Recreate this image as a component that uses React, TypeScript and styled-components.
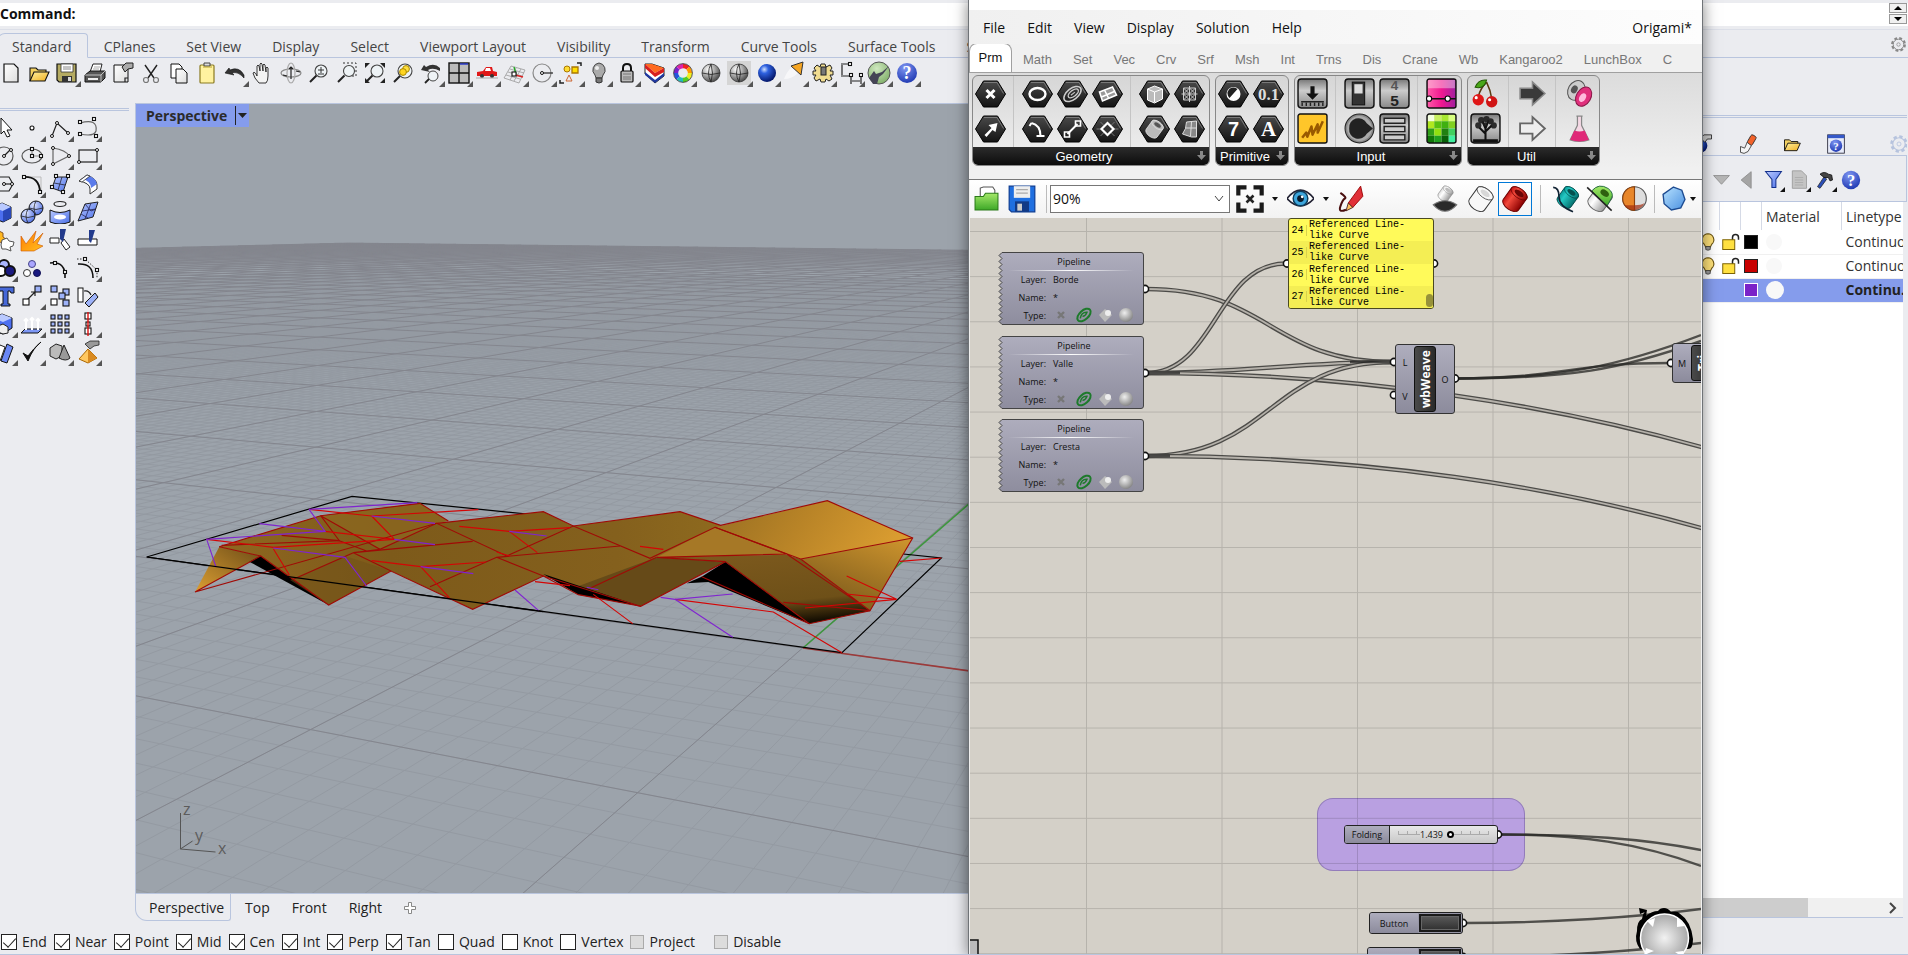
import React from "react";
import styled, { createGlobalStyle, css } from "styled-components";

const GlobalStyle = createGlobalStyle`
  * { box-sizing: border-box; }
  html, body { margin: 0; height: 100%; overflow: hidden; }
  body { font-family: "Open Sans", "Noto Sans", sans-serif; font-size: 14px; color: #333; background: #ebecf0; }
  button, input, select { font: inherit; color: inherit; margin: 0; padding: 0; border: 0; background: none; }
  button svg { display: block; }
`;

const line = "#b9c5de";
const blue = "#859cec";

/* ---------- Shared paint servers ---------- */

const DefsSvg = styled.svg`
  position: absolute;
  width: 0;
  height: 0;
`;

const Defs = () => (
  <DefsSvg aria-hidden="true">
    <defs>
      <radialGradient id="ballGrey" cx="35%" cy="30%" r="75%">
        <stop offset="0" stopColor="#fff" /><stop offset=".5" stopColor="#a5a5a5" /><stop offset="1" stopColor="#444" />
      </radialGradient>
      <radialGradient id="ballBlue" cx="35%" cy="30%" r="75%">
        <stop offset="0" stopColor="#cfe0ff" /><stop offset=".3" stopColor="#2f62e0" /><stop offset="1" stopColor="#001060" />
      </radialGradient>
      <radialGradient id="ballSoft" cx="35%" cy="30%" r="75%">
        <stop offset="0" stopColor="#e4eaff" /><stop offset="1" stopColor="#4a6be0" />
      </radialGradient>
      <radialGradient id="ballHelp" cx="40%" cy="25%" r="80%">
        <stop offset="0" stopColor="#7f96f2" /><stop offset="1" stopColor="#1c36b0" />
      </radialGradient>
      <radialGradient id="ballGreen" cx="40%" cy="30%" r="75%">
        <stop offset="0" stopColor="#cfe8bf" /><stop offset="1" stopColor="#7fae68" />
      </radialGradient>
      <linearGradient id="hexFill" x1="0" y1="0" x2="0" y2="1">
        <stop offset="0" stopColor="#4a4a4a" /><stop offset="1" stopColor="#141414" />
      </linearGradient>
      <linearGradient id="folder" x1="0" y1="0" x2="1" y2="1">
        <stop offset="0" stopColor="#fff0a0" /><stop offset="1" stopColor="#f0b020" />
      </linearGradient>
      <linearGradient id="paper" x1="0" y1="0" x2="1" y2="1">
        <stop offset="0" stopColor="#fff" /><stop offset="1" stopColor="#ddd" />
      </linearGradient>
      <linearGradient id="bluePatch" x1="0" y1="0" x2="1" y2="1">
        <stop offset="0" stopColor="#b9c9ff" /><stop offset="1" stopColor="#4a6fe8" />
      </linearGradient>
      <linearGradient id="flame" x1="0" y1="0" x2="1" y2="1">
        <stop offset="0" stopColor="#ff7a00" /><stop offset="1" stopColor="#ffc020" />
      </linearGradient>
      <linearGradient id="silver" x1="0" y1="0" x2="0" y2="1">
        <stop offset="0" stopColor="#777" /><stop offset=".4" stopColor="#ccc" /><stop offset="1" stopColor="#888" />
      </linearGradient>
      <linearGradient id="redCyl" x1="0" y1="0" x2="1" y2="0">
        <stop offset="0" stopColor="#c01010" /><stop offset=".3" stopColor="#f24a3c" /><stop offset="1" stopColor="#8a0000" />
      </linearGradient>
      <linearGradient id="tealCyl" x1="0" y1="0" x2="1" y2="0">
        <stop offset="0" stopColor="#0a9a98" /><stop offset=".3" stopColor="#25c9c4" /><stop offset="1" stopColor="#05706e" />
      </linearGradient>
      <linearGradient id="greyCyl" x1="0" y1="0" x2="1" y2="0">
        <stop offset="0" stopColor="#ddd" /><stop offset=".3" stopColor="#fff" /><stop offset="1" stopColor="#999" />
      </linearGradient>
      <linearGradient id="sky" x1="0" y1="0" x2="1" y2="1">
        <stop offset="0" stopColor="#b8e2ff" /><stop offset="1" stopColor="#4a90e0" />
      </linearGradient>
      <linearGradient id="green" x1="0" y1="0" x2="0" y2="1">
        <stop offset="0" stopColor="#a4e868" /><stop offset="1" stopColor="#3da828" />
      </linearGradient>
      <linearGradient id="pink" x1="0" y1="0" x2="1" y2="0">
        <stop offset="0" stopColor="#ff5aa8" /><stop offset=".5" stopColor="#f01890" /><stop offset="1" stopColor="#a020a0" />
      </linearGradient>
    </defs>
  </DefsSvg>
);

/* ---------- Icon drawings (24 x 24 unless stated) ---------- */

const k = { fill: "none", stroke: "#222", strokeWidth: 1.2 } as const;
const Sq = ({ x, y, s = 4, f = "#fff" }: { x: number; y: number; s?: number; f?: string }) => (
  <rect x={x - s / 2} y={y - s / 2} width={s} height={s} fill={f} stroke="#111" strokeWidth="1.1" />
);
const Dot = ({ x, y }: { x: number; y: number }) => <circle cx={x} cy={y} r="1.5" fill="#fff" stroke="#111" />;
const Lens = ({ r = 6 }: { r?: number }) => (
  <>
    <path d="M9.5 14.5L3 21" stroke="#222" strokeWidth="2" />
    <circle cx="14" cy="10" r={r} fill="#eef3f6" stroke="#444" strokeWidth="1.1" />
  </>
);
const Help = () => (
  <>
    <circle cx="12" cy="12" r="10" fill="url(#ballHelp)" />
    <text x="12" y="18" textAnchor="middle" fontFamily="Liberation Serif, serif" fontWeight="bold" fontSize="18" fill="#fff">?</text>
  </>
);
const Meridians = () => <path d="M3 12q9 3 18 0M12 3q-5 9 0 18M12 3q3 9 0 18" fill="none" stroke="#222" strokeWidth=".8" />;
const Hammer = () => (
  <>
    <path d="M11 8L3 20l3 2 8-11z" fill="#2c4fb8" stroke="#111" strokeWidth=".8" />
    <path d="M6 5q5-4 10 0l4 1 1 6-3 1-2-4-5 0z" fill="#444" stroke="#111" />
  </>
);
const Cylinder = ({ fill, hole, edge }: { fill: string; hole: string; edge: string }) => (
  <g transform="rotate(36 12 12)">
    <path d="M4 6a8 4 0 0 1 16 0v12a8 4.500 0 0 1-16 0z" fill={fill} stroke={edge} strokeWidth=".8" />
    <ellipse cx="12" cy="6" rx="8" ry="4" fill={fill} stroke={edge} strokeWidth=".6" />
    <ellipse cx="12" cy="6" rx="4.500" ry="2.200" fill={hole} />
  </g>
);

const art: Record<string, React.ReactNode> = {
  new: <path d="M5 3h10l4 4v14H5z" fill="url(#paper)" stroke="#111" strokeWidth="1.2" />,
  open: (
    <>
      <path d="M3 20V7h6l2 2h8v3" fill="#f3d060" stroke="#111" strokeWidth="1.1" />
      <path d="M3 20l4-9h15l-4 9z" fill="url(#folder)" stroke="#111" strokeWidth="1.1" />
    </>
  ),
  save: (
    <>
      <path d="M2 3h19v18H4l-2-2z" fill="#b5ab62" stroke="#111" strokeWidth="1.2" />
      <path d="M6 3h12v8H6z" fill="#fff" stroke="#333" strokeWidth=".8" />
      <path d="M8 6h8M8 8h8" stroke="#888" />
      <path d="M7 15h10v6H7z" fill="#333" /><path d="M13 16h3v4h-3z" fill="#ddd" />
    </>
  ),
  print: (
    <>
      <path d="M7 11l3-8h9l-2 8z" fill="#fff" stroke="#222" /><path d="M11 6h6M10 8h6" stroke="#888" strokeWidth=".7" />
      <path d="M2 14l5-4h15v7l-4 4H2z" fill="#555" stroke="#111" /><path d="M2 14h16l4-4M18 14v7" stroke="#ddd" strokeWidth=".8" fill="none" />
      <path d="M5 17h10v2H5z" fill="#eee" />
    </>
  ),
  props: (<><path d="M3 4h14v17H3z" fill="url(#paper)" stroke="#111" /><path d="M14 21v-4h3" {...k} /><path d="M11 6l4-4h7v5l-5 1-3 3z" fill="#aaa" stroke="#222" /></>),
  cut: (
    <>
      <path d="M6 4l9 13M18 4L9 17" stroke="#222" strokeWidth="1.4" />
      <circle cx="7" cy="19" r="2.5" {...k} stroke="#777" /><circle cx="17" cy="19" r="2.5" {...k} stroke="#777" />
    </>
  ),
  copy: (<><path d="M4 3h8l3 3v11H4z" fill="#fff" stroke="#111" /><path d="M9 8h7l4 4v10H9z" fill="url(#paper)" stroke="#111" /></>),
  paste: (<><rect x="5" y="4" width="14" height="18" rx="1" fill="#fff2a0" stroke="#8a7a20" strokeWidth="1.2" /><path d="M9 5V2h6v3z" fill="#ddd" stroke="#444" /><path d="M8 6h9" stroke="#b59f30" /></>),
  undo: <path d="M2 12l4-5 1 2q9-4 14 5l0 3q-6-7-12-5l2 2z" fill="#333" stroke="#111" strokeWidth=".6" />,
  pan: <path d="M8 22q-5-5-6-10 2-2 4 3V5q1-2 2 0l1 5V3q1-2 2 0l1 7V4q1-2 2 0l1 7V7q1-2 2 0v8q0 5-2 7z" fill="#f3f3f3" stroke="#222" strokeWidth=".9" />,
  orbit: (<><ellipse cx="12" cy="12" rx="10" ry="4" {...k} stroke="#888" /><ellipse cx="12" cy="12" rx="4" ry="10" {...k} stroke="#aaa" /><path d="M12 6v12M10 8l2-2 2 2M8 15l-4-1M17 10l4 1" {...k} /></>),
  zoom: (<><Lens /><path d="M11 9h6M14 6v6M11 13h6" stroke="#333" fill="none" /></>),
  zoomWin: (<><path d="M8 2h13v13h-5" fill="none" stroke="#333" strokeDasharray="2 2" /><Lens r={5.5} /></>),
  zoomExt: (<><Lens r={6} /><path d="M2 7V2h5zM17 2h5v5zM22 17v5h-5zM2 17v5h5z" fill="#222" /></>),
  zoomSel: (<><Lens r={7} /><circle cx="15" cy="8" r="3.4" fill="#ffe040" stroke="#a80" /><circle cx="12" cy="11" r="3.4" fill="#ffd520" stroke="#a80" /></>),
  zoomPrev: (<><path d="M2 9l3-5 2 2q8-5 14 1v3q-7-4-12-1l2 2z" fill="#333" /><circle cx="14" cy="15" r="5" fill="#eef3f6" stroke="#444" /><path d="M10 18l-4 4" stroke="#222" strokeWidth="1.8" /></>),
  views: (<><rect x="2" y="2" width="20" height="20" fill="#bbb" stroke="#111" strokeWidth="1.4" /><path d="M12 2v20M2 12h20" stroke="#111" strokeWidth="1.4" /><path d="M13 3h8" stroke="#23c" strokeWidth="1.4" /></>),
  car: (<><path d="M2 15v-4l6-1 3-4h6l1 4 4 1v4z" fill="#e01818" /><path d="M11 7h4l1 3h-6z" fill="#fff" /><circle cx="7" cy="15" r="2" fill="#333" /><circle cx="17" cy="15" r="2" fill="#333" /><path d="M1 17h22" stroke="#aaa" /></>),
  cplane: (<><path d="M8 5l14 4-6 13L1 17zM5 11l14 4M13 7l-6 12M18 8l-7 12M7 8l14 4M3 14l14 4" fill="none" stroke="#999" strokeWidth=".8" /><path d="M13 13l-2-7" stroke="#2a2" strokeWidth="1.4" /><path d="M12 14l8 2" stroke="#d22" strokeWidth="1.4" /><Sq x={11} y={13} /></>),
  setcp: (<><circle cx="11" cy="12" r="9" {...k} stroke="#888" /><path d="M11 12h11" {...k} /><Dot x={11} y={12} /></>),
  shapes: (<><circle cx="8" cy="8" r="3" fill="#fd3" stroke="#a70" /><path d="M13 6h6v6h-6z" fill="#fd0" stroke="#a70" strokeWidth="1.3" /><path d="M10 14l3 6H7z" fill="none" stroke="#c63" /><path d="M18 2h4v3M1 19v3h4" {...k} strokeWidth="1.5" /></>),
  bulb: (<><path d="M12 2a7 7 0 0 0-4 12l1 3h6l1-3a7 7 0 0 0-4-12z" fill="#aaa" stroke="#444" /><path d="M9 17h6v4l-3 1-3-1z" fill="#777" stroke="#333" /><circle cx="10" cy="7" r="2" fill="#eee" /></>),
  lock: (<><path d="M8 11V7q0-4 4-4t4 4v4" fill="none" stroke="#111" strokeWidth="2" /><rect x="6" y="10" width="12" height="11" rx="1" fill="#bbb" stroke="#111" strokeWidth="1.2" /><path d="M8 13h8M8 16h8M8 18h8" stroke="#777" /></>),
  layer: (<><path d="M2 3l7 0 12 4v8l-9 7-10-9z" fill="#fff" stroke="#222" /><path d="M2 3l7 0 12 4-9 5z" fill="#ff6a20" /><path d="M2 3l10 9v4L2 7zM12 12l9-5v4l-9 5z" fill="#d81e1e" /><path d="M2 11l10 8 9-7v3l-9 7-10-8z" fill="#2038a0" /></>),
  wheel: (
    <>
      {["#e22", "#f90", "#ee2", "#5c2", "#2bb", "#25d", "#72c", "#d2a"].map((c, i) => (
        <path key={c} d="M12 5A7 7 0 0 1 17 7" fill="none" stroke={c} strokeWidth="4.4" transform={`rotate(${i * 45} 12 12)`} />
      ))}
      <circle cx="12" cy="12" r="9.4" fill="none" stroke="#333" strokeWidth=".8" />
    </>
  ),
  wire: (<><circle cx="12" cy="12" r="9" fill="url(#ballGrey)" stroke="#333" strokeWidth=".8" /><Meridians /></>),
  shade: (<><rect width="24" height="24" fill="#d5d5d5" /><circle cx="12" cy="12" r="9" fill="url(#ballGrey)" stroke="#333" strokeWidth=".8" /><Meridians /></>),
  render: <circle cx="12" cy="12" r="9" fill="url(#ballBlue)" />,
  spot: (<><path d="M1 18q3-8 8-12l6 6q-6 6-14 6z" fill="#fff" opacity=".6" /><path d="M8 5l12-4-2 13z" fill="#f6a623" stroke="#333" /></>),
  gear: (<><path d="M10 3h4l1 3 4-2 2 3-2 3h3v4l-3 0 2 4-3 2-3-2-1 3h-4l-1-3-4 2-2-3 2-3-3 0v-4l3 0-2-3 3-3 3 2z" fill="#f0dc90" stroke="#222" /><rect x="10" y="6" width="5" height="8" fill="#777" stroke="#222" /></>),
  dims: (<><path d="M2 3h8M2 15h9M3 4v10M12 15v8M22 15v8M13 20h8" {...k} /><Sq x={11} y={3} s={3} /><Sq x={12} y={14} s={3} /><Sq x={22} y={14} s={3} /></>),
  gh: (<><circle cx="12" cy="12" r="11" fill="url(#ballGreen)" stroke="#555" /><path d="M2 17l5-7 2 3 6-2 7-6-6 8-4 3-2 7H6z" fill="#445" /></>),
  help: <Help />,

  arrow: <path d="M9 2l11 12-5 0 3 6-3 1-3-6-3 3z" fill="#fff" stroke="#111" />,
  point: <circle cx="12" cy="12" r="2" fill="#fff" stroke="#111" strokeWidth="1.1" />,
  polyline: (<><path d="M4 20L9 7l11 10" {...k} /><Dot x={4} y={20} /><Dot x={9} y={7} /><Dot x={20} y={17} /></>),
  curve: (<><path d="M4 7q18-5 16 8-2 6-16 3" {...k} stroke="#666" /><Sq x={4} y={6} s={3} /><Sq x={18} y={3} s={3} /><Sq x={4} y={18} s={3} /><Sq x={20} y={20} s={3} /></>),
  circle: (<><circle cx="12" cy="12" r="9" {...k} stroke="#555" /><path d="M12 12l7-7" {...k} /><Dot x={12} y={12} /><Dot x={19} y={6} /></>),
  ellipse: (<><ellipse cx="12" cy="12" rx="10" ry="7" {...k} stroke="#555" /><path d="M12 5v7h9" {...k} stroke="#888" /><Sq x={12} y={5} s={3} /><Sq x={12} y={12} s={3} /><Sq x={21} y={12} s={3} /></>),
  arc: (<><path d="M5 4q13 2 16 8L5 20z" {...k} stroke="#666" /><Dot x={5} y={4} /><Dot x={21} y={12} /><Dot x={5} y={20} /></>),
  rect: (<><rect x="3" y="6" width="18" height="12" {...k} /><Dot x={3} y={18} /><Dot x={21} y={6} /></>),
  polygon: (<><path d="M1 5h16l4 7-4 7H1" {...k} /><path d="M12 12h8" {...k} /><Dot x={12} y={12} /><Dot x={20} y={12} /></>),
  fillet: (<><path d="M3 5h18v16" fill="none" stroke="#bbb" /><path d="M3 5q17-1 17 16" fill="none" stroke="#111" strokeWidth="1.8" /><Sq x={4} y={5} s={3} /><Sq x={20} y={20} s={3} /></>),
  surface: (<><path d="M8 5h12l-5 15-11-4z" fill="url(#bluePatch)" stroke="#222" /><path d="M14 5l-4 13M6 11l11 2" stroke="#223" strokeWidth=".8" /><Sq x={8} y={4} s={3} /><Sq x={20} y={4} s={3} /><Sq x={4} y={15} s={3} /><Sq x={15} y={20} s={3} /></>),
  revolve: (<><path d="M3 9l8-6q10 4 10 10v4l-7 5v-5q0-6-11-8z" fill="#fff" stroke="#333" /><path d="M6 7q9 2 9 9l6-4Q20 6 11 3z" fill="#5b7bea" /><path d="M3 9l8-6 3 1-8 6z" fill="#fff" stroke="#333" strokeWidth=".8" /></>),
  box: (<><path d="M1 8l9-5 9 4v11l-8 4-10-4z" fill="#4c6ff0" stroke="#111" /><path d="M1 8l9-5 9 4-8 4z" fill="#b9c9ff" /><path d="M11 11l8-4v11l-8 4z" fill="#2a48b8" /></>),
  spheres: (<><circle cx="16" cy="8" r="7" fill="url(#ballSoft)" stroke="#111" /><circle cx="8" cy="16" r="7" fill="url(#ballSoft)" stroke="#111" /><path d="M9 8q7 3 14 0M16 1q-4 7 0 14M1 16q7 3 14 0M8 9q-4 7 0 14" {...k} strokeWidth=".8" /></>),
  loft: (<><ellipse cx="12" cy="4" rx="6" ry="2.5" {...k} /><path d="M2 10q10 5 20 0v12q-10 4-20 0z" fill="url(#bluePatch)" stroke="#111" /><ellipse cx="12" cy="17" rx="6" ry="2.5" fill="#fff" /></>),
  mesh: (<><path d="M9 4l13-2-5 15-15 4z" fill="url(#bluePatch)" stroke="#222" /><path d="M15 3L9 19M6 11l14-2M9 4l6 7M15 11l5-2M5 14l7 4" stroke="#225" strokeWidth=".8" /></>),
  puzzle: (<><path d="M5 2l6 3 0 4 4 3-3 4-6-3-4 0V3z" fill="#ffb820" stroke="#852" /><path d="M10 12l5-2 2 3 5 1-1 4-3 1 1 4-5-2-4 0-1-4z" fill="#fff" stroke="#555" /></>),
  explode: <path d="M1 23V8l5 8L16 3l-3 12L23 5l-6 11 6 2-9 5z" fill="url(#flame)" stroke="#c50" strokeWidth=".6" />,
  trim: (<><path d="M2 10h9v5H2zM13 15l3-4 6 8-4 3z" fill="#fff" stroke="#222" /><path d="M12 1h6l-3 13-3-3z" fill="#223a8c" /></>),
  split: (<><path d="M2 11h19v6H2z" fill="#fff" stroke="#111" /><path d="M13 2h6l-4 13-2-2z" fill="#223a8c" /></>),
  group: (<><circle cx="12" cy="9" r="5" fill="#aab6ff" stroke="#111" strokeWidth="2" /><circle cx="9" cy="15" r="5" fill="#fff" stroke="#111" strokeWidth="2" /><circle cx="18" cy="15" r="5" fill="#1a1a80" stroke="#111" strokeWidth="2" /></>),
  ungroup: (<><circle cx="12" cy="8" r="3.5" fill="#aaa6ff" stroke="#448" /><circle cx="7" cy="17" r="3.5" fill="#fff" stroke="#333" /><circle cx="17" cy="17" r="3.5" fill="#1a1a80" stroke="#115" /></>),
  editPts: (<><path d="M2 7q16-2 15 15" fill="none" stroke="#111" strokeWidth="1.6" /><Sq x={7} y={7} s={3} /><Sq x={17} y={16} s={3} /></>),
  ctrlPts: (<><path d="M2 8q15-1 15 14" fill="none" stroke="#111" strokeWidth="1.6" /><path d="M1 3h8l12 11v8" fill="none" stroke="#333" strokeDasharray="1.5 1.5" /><Sq x={9} y={3} s={3} /><Sq x={21} y={14} s={3} /></>),
  text: <path d="M5 3h17v6h-3l-1-2h-2v13h2v2H9v-2h2V7H8L6 10z" fill="#4668d8" stroke="#111" />,
  move: (<><path d="M7 16l8-8m-4 0h4v4" {...k} /><Sq x={6} y={18} s={6} /><Sq x={18} y={5} s={6} f="#9db2f8" /></>),
  copies: (<><Sq x={6} y={5} s={6} f="#9db2f8" /><Sq x={18} y={8} s={6} f="#9db2f8" /><Sq x={14} y={12} s={6} f="#9db2f8" /><Sq x={6} y={18} s={6} /><Sq x={18} y={19} s={6} f="#9db2f8" /></>),
  rotate: (<><rect x="2" y="4" width="5" height="14" fill="#fff" stroke="#111" /><path d="M8 7q5-1 7 4" {...k} /><path d="M9 19l10-10 3 4-9 10z" fill="#9db2f8" stroke="#111" /></>),
  cage: (<><path d="M1 6l9-4 10 4v10l-9 6-10-3z" fill="#4c6ff0" stroke="#111" /><path d="M1 6l9-4 10 4-9 4z" fill="#b9c9ff" /><path d="M6 14l5-2 5 3v6l-5 1-5-2z" fill="#eee" stroke="#222" /></>),
  extrude: (<><path d="M1 21l4-4h17l-4 4z" fill="#7d97f5" stroke="#111" /><path d="M6 18V7m-2 2l2-2 2 2M12 18V6m-2 2l2-2 2 2M18 18V7m-2 2l2-2 2 2" stroke="#fff" strokeWidth="2" fill="none" /></>),
  array: <>{[5, 12, 19].map((y) => [5, 12, 19].map((x) => <Sq key={`${x}-${y}`} x={x} y={y} s={4} f="#9db2f8" />))}</>,
  align: (<><Sq x={12} y={4} s={6} /><Sq x={12} y={12} s={4} /><Sq x={12} y={19} s={6} /><path d="M12 0v24" stroke="#d11" strokeWidth="1.4" /></>),
  flow: (<><path d="M2 20l6-15 5 2-5 14z" fill="#fff" stroke="#222" /><path d="M9 21l6-17 6 3-6 16z" fill="#6b88f5" stroke="#111" /></>),
  check: <path d="M3 13l5 8Q13 8 21 2 13 9 8 16z" fill="#111" stroke="#111" />,
  solids: (<><path d="M2 8l6-4 6 2v10l-6 3-6-3z" fill="#bbb" stroke="#222" /><path d="M16 5l6 13q-4 4-11 0z" fill="#999" stroke="#222" /></>),
  pyramid: (<><path d="M12 9l9 9-9 5-9-4z" fill="#ffc860" stroke="#a60" /><path d="M12 9l9 9-9 5z" fill="#d98a20" /><path d="M9 4l5-3h9v4l-5 1-4 3z" fill="#999" stroke="#222" strokeWidth=".8" /></>),

  tube: (<><rect x="13" y="1" width="7" height="12" rx="2" fill="#f2622a" stroke="#333" transform="rotate(30 16 7)" /><path d="M3 15l5 2 3-7 5 4-4 7q-5 4-9 1z" fill="#f4f4f4" stroke="#333" /></>),
  panelHelp: (<><rect x="2" y="1" width="20" height="22" fill="#e8ecfa" stroke="#223" /><path d="M2 1h20v4H2z" fill="#3558c8" /><circle cx="12" cy="14" r="7.5" fill="url(#ballHelp)" /><text x="12" y="19" textAnchor="middle" fontFamily="Liberation Serif, serif" fontWeight="bold" fontSize="13" fill="#fff">?</text></>),
  down: <path d="M2 7h20L12 18z" fill="#b5b5b5" stroke="#888" />,
  left: <path d="M17 2v20L5 12z" fill="#a5a5a5" stroke="#888" />,
  funnel: <path d="M2 2h20l-7 10v10h-5V12z" fill="url(#bluePatch)" stroke="#13308c" strokeWidth="1.3" />,
  doc: (<><path d="M4 1h11l6 6v15H4z" fill="#c4c4c4" stroke="#999" /><path d="M7 9h10M7 12h10M7 15h10M7 18h10" stroke="#aaa" /></>),
  hammer: <Hammer />,
  cog: (<><circle cx="12" cy="12" r="9" fill="none" stroke="currentColor" strokeWidth="3" strokeDasharray="4 3.07" /><circle cx="12" cy="12" r="7.5" fill="none" stroke="currentColor" strokeWidth="1.4" /><circle cx="12" cy="12" r="2.4" fill="none" stroke="currentColor" /></>),
  paint: (<><circle cx="8" cy="14" r="8" fill="url(#ballBlue)" /><path d="M8 5l4-4h9v5l-5 0-3 4z" fill="#ccc" stroke="#222" /></>),
  yellowBulb: (<><path d="M12 1a8 8 0 0 0-5 14l2 4h6l2-4a8 8 0 0 0-5-14z" fill="#ffe27a" stroke="#6a5310" strokeWidth="1.4" /><path d="M9 18h6v4l-3 1-3-1z" fill="#999" stroke="#333" /></>),
  unlock: (<><path d="M14 11V6q0-4 4-4t4 4v3" fill="none" stroke="#222" strokeWidth="2" /><rect x="1" y="9" width="16" height="13" fill="#ffe040" stroke="#7a6000" strokeWidth="1.3" /></>),

  ghOpen: (<><path d="M6 14V2l3-1h9l2 3v10z" fill="#fff" stroke="#555" /><path d="M1 10h8l2-3h12v16H1z" fill="url(#green)" stroke="#2a7a18" /></>),
  ghSave: (<><path d="M1 1h22v22H3l-2-2z" fill="#1f6fe0" stroke="#0b3a90" /><path d="M5 1h14v10H5z" fill="#eee" /><path d="M7 4h10M7 7h10" stroke="#aaa" /><path d="M6 14h12v9H6z" fill="#123a86" /><path d="M8 16h4v6H8z" fill="#ccc" /></>),
  focus: (<><path d="M2 9V2h7M15 2h7v7M22 15v7h-7M9 22H2v-7" fill="none" stroke="#1a1a1a" strokeWidth="3.6" /><path d="M9 9l6 6M15 9l-6 6" stroke="#222" strokeWidth="2.2" /></>),
  eye: (<><path d="M0 12Q12-3 24 12 12 25 0 12z" fill="#fff" stroke="#223" strokeWidth="1.5" /><circle cx="12" cy="12" r="6.5" fill="#3da6dc" stroke="#0c3c5c" strokeWidth="1.3" /><circle cx="12" cy="12" r="3" fill="#0a1a2a" /><circle cx="13.5" cy="10.5" r="1.2" fill="#fff" /></>),
  pencil: (<><path d="M10 16L21 1l2 9-9 10z" fill="#e03038" stroke="#900" strokeWidth=".8" /><path d="M10 16l-2 7 6-3z" fill="#ffc060" stroke="#422" strokeWidth=".8" /><path d="M8 22Q1 25 3 19t4-7-4-5" fill="none" stroke="#4a1010" strokeWidth="1.8" /></>),
  noPrev: (<><g transform="translate(5 0) scale(.62)"><Cylinder fill="url(#greyCyl)" hole="#bbb" edge="#888" /></g><path d="M2 17q10-7 20 0-10 11-20 0z" fill="#2a2a2a" stroke="#777" /></>),
  wirePrev: <Cylinder fill="#f8f8f8" hole="#d8d8d8" edge="#333" />,
  shadePrev: <Cylinder fill="url(#redCyl)" hole="#6a0606" edge="#6a0000" />,
  teal: (<><g transform="translate(3 0) scale(.88)"><Cylinder fill="url(#tealCyl)" hole="#045250" edge="#044" /></g><path d="M1 2q5 0 5 8t12 13" fill="none" stroke="#123" strokeWidth="1.4" /></>),
  halfGreen: (<><Cylinder fill="url(#greyCyl)" hole="#999" edge="#666" /><path d="M5 5Q11-2 19 3q5 4 3 8l-4 7z" fill="url(#green)" stroke="#264" strokeWidth=".8" /><path d="M1 2l21 20" stroke="#222" strokeWidth="1.3" /><ellipse cx="16" cy="7" rx="4" ry="2.600" fill="#2f6010" transform="rotate(36 16 7)" /></>),
  halfOrange: (<><circle cx="12" cy="12" r="10.5" fill="#ddd" stroke="#555" /><path d="M12 1.500a10.500 10.500 0 0 0 0 21z" fill="#e8862a" stroke="#8a4210" /><path d="M12 18q6 0 9-2a10.500 10.500 0 0 1-18 2z" fill="#a02c10" opacity=".7" /></>),
  hepta: <path d="M12 1l8 3 3 9-4 8-9 2-7-6-1-9z" fill="url(#sky)" stroke="#1c4a90" strokeWidth="1.3" />,
};

const Pic = ({ n, s = 24 }: { n: string; s?: number }) => (
  <svg width={s} height={s} viewBox="0 0 24 24" aria-hidden="true">{art[n]}</svg>
);

/* ---------- Rhino shell ---------- */

const Shell = styled.div`
  position: relative;
  display: flex;
  flex-direction: column;
  height: 100vh;
  overflow: hidden;
  background: #ebecf0;
  border-bottom: 1px solid ${line};
`;

const CommandBar = styled.div`
  display: flex;
  flex: none;
  align-items: center;
  height: 23px;
  margin-top: 3px;
  padding-bottom: 2px;
  background: #fff;
  font-weight: 700;
  color: #111;
`;

const CommandInput = styled.input`
  flex: 1;
  height: 100%;
  outline: none;
  padding: 0 6px;
`;

const Spinner = styled.div`
  display: flex;
  flex-direction: column;
  gap: 1px;
  margin-right: 1px;
`;

const SpinButton = styled.button`
  width: 18px;
  height: 10px;
  background: #f0f0f0;
  border: 1px solid #999;
  display: grid;
  place-items: center;
`;

const TabStrip = styled.nav`
  display: flex;
  flex: none;
  gap: 1px;
  align-items: flex-end;
  height: 29px;
  margin-top: 3px;
  border-top: 1px solid #dcdfe8;
  border-bottom: 1px solid ${line};
`;

const ToolTab = styled.button<{ $active?: boolean }>`
  flex: none;
  height: 24px;
  padding: 2px 15px 0;
  white-space: nowrap;
  color: #444;
  ${(p) =>
    p.$active &&
    css`
      margin-left: -3px;
      margin-bottom: -1px;
      height: 25px;
      border: 1px solid ${line};
      border-bottom-color: #ebecf0;
      border-radius: 8px 4px 0 0;
      padding-left: 14px;
    `}
`;

const TabGear = styled.button`
  margin-left: auto;
  width: 18px;
  height: 25px;
  color: #888;
`;

const Toolbar = styled.div`
  display: flex;
  flex: none;
  height: 45px;
  margin-left: -3px;
`;

const ToolButton = styled.button<{ $more?: boolean }>`
  position: relative;
  display: grid;
  flex: none;
  place-items: center;
  width: 28px;
  height: 28px;
  margin-top: 1px;
  ${(p) =>
    p.$more &&
    css`
      &::after {
        content: "";
        position: absolute;
        right: 0;
        bottom: 0;
        border-style: solid;
        border-width: 0 0 6px 6px;
        border-color: transparent transparent #555 transparent;
      }
    `}
`;

const Body = styled.div`
  display: flex;
  flex: 1;
  min-height: 0;
`;

const Toolbox = styled.aside`
  flex: none;
  width: 135px;
`;

const Grip = styled.div`
  width: 129px;
  height: 3px;
  margin-top: 5px;
  border-top: 1px solid ${line};
  border-bottom: 1px solid ${line};
`;

const ToolGrid = styled.div`
  display: grid;
  grid-template-columns: repeat(4, 28px);
  grid-auto-rows: 28px;
  margin: 2px 0 0 -10px;
`;

const Center = styled.main`
  display: flex;
  flex: 1;
  flex-direction: column;
  min-width: 0;
`;

const Viewport = styled.section`
  position: relative;
  flex: 1;
  min-height: 0;
  background: #9ca3ab;
  border: 1px solid ${line};
  overflow: hidden;
`;

const Scene = styled.svg`
  position: absolute;
  inset: 0;
  width: 100%;
  height: 100%;
`;

const ViewTitle = styled.button`
  position: absolute;
  top: 0;
  left: 0;
  display: flex;
  align-items: center;
  height: 23px;
  background: ${blue};
  font-weight: 700;
  color: #2b2b2b;
  padding-left: 10px;
  svg { margin-left: 8px; }
`;

const ViewTabs = styled.nav`
  display: flex;
  flex: none;
  align-items: center;
  height: 29px;
  padding-bottom: 2px;
  color: #222;
`;

const ViewTab = styled.button<{ $active?: boolean }>`
  padding: 0 11px;
  height: 27px;
  ${(p) =>
    p.$active &&
    css`
      width: 96px;
      margin-right: 3px;
      padding: 0 6px 0 13px;
      border: 1px solid ${line};
      border-top: 0;
      border-radius: 0 0 3px 12px;
    `}
`;

const OsnapBar = styled.footer`
  display: flex;
  flex: none;
  align-items: center;
  gap: 7px;
  height: 31px;
  padding-left: 1px;
  padding-top: 6px;
`;

const Snap = styled.label<{ $off?: boolean }>`
  display: flex;
  align-items: center;
  gap: 5px;
  color: #222;
  margin-right: ${(p) => (p.$off ? 12 : 0)}px;
`;

const SnapBox = styled.input`
  appearance: none;
  position: relative;
  width: 16px;
  height: 16px;
  background: #fff;
  border: 1px solid #222;
  &:disabled {
    width: 14px;
    height: 14px;
    border-color: #aaa;
    background: #dcdcdc;
  }
  &:checked::after {
    content: "";
    position: absolute;
    left: 4px;
    top: 0;
    width: 6px;
    height: 11px;
    border: solid #222;
    border-width: 0 1px 1px 0;
    transform: rotate(42deg);
  }
`;

/* ---------- Layers panel ---------- */

const SidePanel = styled.aside`
  display: flex;
  flex: none;
  flex-direction: column;
  width: 230px;
  padding-right: 1px;
`;

const PanelGrip = styled.div`
  flex: none;
  height: 3px;
  margin-top: 12px;
  border-top: 1px solid ${line};
  border-bottom: 1px solid ${line};
`;

const PanelTabs = styled.div`
  display: flex;
  flex: none;
  gap: 18px;
  align-items: center;
  height: 38px;
  padding-top: 14px;
  padding-left: 13px;
  border-bottom: 1px solid ${line};
`;

const PanelTools = styled.div`
  display: flex;
  flex: none;
  align-items: center;
  justify-content: flex-end;
  height: 46px;
  padding: 2px 42px 0 0;
  border-right: 1px solid ${line};
  border-bottom: 1px solid ${line};
`;

const PanelTool = styled.button<{ $more?: boolean }>`
  position: relative;
  display: grid;
  place-items: center;
  width: 26px;
  height: 24px;
  ${(p) =>
    p.$more &&
    css`
      &::after {
        content: "";
        position: absolute;
        right: 1px;
        bottom: 0;
        border-style: solid;
        border-width: 0 0 5px 5px;
        border-color: transparent transparent #111 transparent;
      }
    `}
`;

const PanelGear = styled.button`
  color: #b6c3de;
  width: 18px;
  margin-left: auto;
  overflow: hidden;
`;

const LayerList = styled.div`
  flex: 1;
  min-height: 0;
  background: #fff;
  border-right: 4px solid #ebecf0;
  overflow: hidden;
`;

const LayerTable = styled.table`
  width: 100%;
  table-layout: fixed;
  border-collapse: collapse;
  th {
    height: 28px;
    padding: 0 0 0 4px;
    font-weight: 400;
    text-align: left;
    border-left: 1px solid #d5dae6;
  }
  td { height: 24px; padding: 0; line-height: 22px; white-space: nowrap; overflow: hidden; }
  td:last-child { padding-left: 4px; }
  td svg { display: block; }
`;

const LayerRow = styled.tr<{ $current?: boolean }>`
  border-bottom: 1px solid #f0f0f0;
  ${(p) => p.$current && css`background: ${blue}; font-weight: 700; color: #222;`}
`;

const Swatch = styled.button<{ $c: string; $current?: boolean }>`
  display: block;
  width: 14px;
  height: 14px;
  margin: 0 auto;
  background: ${(p) => p.$c};
  border: 1px solid ${(p) => (p.$current ? "#fff" : "#222")};
`;

const BulbCell = styled.td`
  svg { margin-left: auto; margin-right: 3px; }
`;

const LockCell = styled.td`
  svg { margin-left: 2px; }
`;

const MaterialDot = styled.span<{ $current?: boolean }>`
  display: block;
  width: ${(p) => (p.$current ? 18 : 16)}px;
  height: ${(p) => (p.$current ? 18 : 16)}px;
  margin-left: 4px;
  border-radius: 50%;
  background: #f8f8f8;
`;

const PanelScroll = styled.div`
  display: flex;
  flex: none;
  align-items: center;
  justify-content: space-between;
  height: 20px;
  margin-right: 4px;
  margin-bottom: 5px;
  background: #f0f0f0;
  border-bottom: 1px solid ${line};
`;

const ScrollThumb = styled.div`
  width: 130px;
  height: 100%;
  background: #cdcdcd;
`;

const ScrollArrow = styled.button`
  width: 14px;
`;

/* ---------- Grasshopper window ---------- */

const Window = styled.section`
  position: absolute;
  top: 0;
  bottom: -2px;
  left: 968px;
  right: 205px;
  display: flex;
  flex-direction: column;
  background: #f0f0f0;
  border: solid #6f7377;
  border-width: 0 1px;
  box-shadow: 0 0 14px rgba(0, 0, 0, 0.5);
  color: #111;
`;

const TitleGap = styled.div`
  flex: none;
  height: 10px;
  background: #fff;
`;

const MenuBar = styled.nav`
  display: flex;
  flex: none;
  align-items: center;
  height: 34px;
  padding: 0 10px 0 3px;
  background: linear-gradient(90deg, #f0f0f0, #fdfdfd);
`;

const MenuItem = styled.button`
  padding: 0 11px;
  height: 34px;
`;

const DocName = styled.span`
  margin-left: auto;
`;

const Categories = styled.nav`
  display: flex;
  flex: none;
  gap: 1px;
  align-items: flex-end;
  height: 29px;
  overflow: hidden;
  font-family: "Liberation Sans", sans-serif;
  font-size: 13px;
  color: #777;
  border-bottom: 1px solid #a0a0a0;
`;

const Category = styled.button<{ $active?: boolean }>`
  flex: none;
  height: 26px;
  padding: 0 10px;
  ${(p) =>
    p.$active &&
    css`
      height: 29px;
      width: 43px;
      padding: 0 8px 2px;
      color: #111;
      background: #fff;
      border: 1px solid #a0a0a0;
      border-bottom: 0;
      border-radius: 8px 8px 0 0;
    `}
`;

const Ribbon = styled.div`
  display: flex;
  flex: none;
  gap: 5px;
  height: 107px;
  padding: 2px 0 0 3px;
  background: linear-gradient(#dcdcdc, #f0f0f0 90%);
  border-bottom: 1px solid #777;
`;

const Group = styled.div`
  display: flex;
  flex: none;
  flex-direction: column;
  height: 91px;
  border: 1px solid #888;
  border-radius: 6px;
  background: linear-gradient(#d6d6d6, #f2f2f2);
  overflow: hidden;
`;

const GroupBody = styled.div`
  display: flex;
  flex: 1;
  padding: 0 2px 0 0;
`;

const GroupCells = styled.div`
  display: grid;
  grid-template-rows: repeat(2, 35px);
  grid-auto-flow: column;
  grid-auto-columns: 35px;
  & + & {
    margin-left: 5px;
    padding-left: 6px;
    border-left: 1px solid #c4c4c4;
  }
`;

const Cell = styled.button`
  display: grid;
  place-items: center;
`;

const GroupLabel = styled.button`
  display: flex;
  align-items: center;
  justify-content: center;
  position: relative;
  height: 18px;
  background: linear-gradient(#2c2c2c, #0c0c0c);
  color: #fff;
  font-family: "Liberation Sans", sans-serif;
  font-size: 13px;
  padding-right: 14px;
  svg { position: absolute; right: 3px; top: 4px; }
`;

const CanvasBar = styled.div`
  display: flex;
  flex: none;
  align-items: center;
  height: 38px;
  padding: 0 3px 1px 2px;
  margin: 0 1px;
  background: linear-gradient(#fff, #f2f2f2);
`;

const BarButton = styled.button<{ $w?: number; $on?: boolean }>`
  display: grid;
  flex: none;
  place-items: center;
  width: ${(p) => p.$w ?? 34}px;
  height: 34px;
  ${(p) => p.$on && css`border: 1px solid #0078d7;`}
`;

const BarRule = styled.span<{ $gap?: number }>`
  flex: none;
  width: 1px;
  height: 28px;
  margin: 0 ${(p) => p.$gap ?? 4}px;
  background: #bbb;
`;

const Flex = styled.span`
  flex: 1;
`;

const ZoomBox = styled.span`
  position: relative;
  flex: none;
  width: 180px;
  height: 28px;
  svg { position: absolute; right: 6px; top: 10px; pointer-events: none; }
`;

const ZoomSelect = styled.select`
  appearance: none;
  width: 100%;
  height: 100%;
  padding: 0 2px;
  background: #fff;
  border: 1px solid #777;
`;

const Canvas = styled.div`
  position: relative;
  flex: 1;
  min-height: 0;
  margin: 0 1px;
  background: #d4d0c8;
  overflow: hidden;
  font-size: 9px;
`;

const ox = 970;
const oy = 218;
const placed = css<{ $x: number; $y: number }>`
  position: absolute;
  left: ${(p) => p.$x - ox}px;
  top: ${(p) => p.$y - oy}px;
`;

const PipelineBox = styled.div<{ $x: number; $y: number }>`
  ${placed}
  width: 146px;
  height: 73px;
`;

const PipelineShape = styled.svg`
  position: absolute;
  inset: 0;
`;

const PipelineRows = styled.div`
  position: relative;
  display: grid;
  grid-template-columns: 48px 1fr;
  grid-auto-rows: 18px;
  column-gap: 7px;
  align-items: center;
`;

const PipelineTitle = styled.div`
  grid-column: 1 / -1;
  padding-left: 6px;
  text-align: center;
`;

const RowName = styled.span`
  text-align: right;
`;

const TypeIcons = styled.span`
  display: flex;
  svg { display: block; }
`;

const DataPanel = styled.div<{ $x: number; $y: number }>`
  ${placed}
  display: flex;
  flex-direction: column;
  width: 146px;
  height: 91px;
  background: #fffa5a;
  border: 1px solid #4a4920;
  border-radius: 3px;
  overflow: hidden;
  font-family: "Liberation Mono", monospace;
  font-size: 10px;
  line-height: 11px;
  color: #000;
`;

const DataRow = styled.div`
  display: grid;
  grid-template-columns: 18px 1fr;
  flex: 1;
  align-items: center;
  column-gap: 2px;
  &:nth-child(even) { background: #f4ee54; }
`;

const DataIndex = styled.span`
  text-align: center;
  border-right: 1px solid #d8d24c;
`;

const DataThumb = styled.span`
  position: absolute;
  right: 0;
  bottom: 1px;
  width: 7px;
  height: 13px;
  border-radius: 4px;
  background: #97923a;
`;

const Component = styled.div<{ $x: number; $y: number; $w: number; $h: number }>`
  ${placed}
  display: flex;
  align-items: center;
  width: ${(p) => p.$w}px;
  height: ${(p) => p.$h}px;
  background: linear-gradient(#aeadbd, #8c8b9c);
  border: 1px solid #333;
  border-radius: 3px;
`;

const Ports = styled.div`
  display: flex;
  flex: 1;
  flex-direction: column;
  align-self: stretch;
  align-items: center;
  justify-content: space-around;
`;

const CoreName = styled.div`
  align-self: stretch;
  display: grid;
  place-items: center;
  width: 22px;
  margin: 1px 0;
  background: linear-gradient(90deg, #2a2a2a, #4a4a4a);
  border: 1px solid #111;
  border-radius: 3px;
  color: #fff;
  font-size: 12px;
  font-weight: 700;
  writing-mode: vertical-rl;
  rotate: 180deg;
`;

const GroupArea = styled.div<{ $x: number; $y: number }>`
  ${placed}
  width: 208px;
  height: 73px;
  border: 1px solid rgba(110, 90, 150, 0.5);
  border-radius: 16px;
  background: rgba(168, 130, 240, 0.62);
`;

const NumberSlider = styled.label<{ $x: number; $y: number }>`
  ${placed}
  display: flex;
  width: 154px;
  height: 19px;
  border: 1px solid #222;
  border-radius: 3px;
  overflow: hidden;
  background: linear-gradient(#e8e8e8, #c8c8c8);
`;

const NodeName = styled.span<{ $w: number }>`
  display: grid;
  place-items: center;
  width: ${(p) => p.$w}px;
  background: linear-gradient(#aeadbd, #8c8b9c);
  border-right: 1px solid #222;
`;

const SliderTrack = styled.span`
  position: relative;
  flex: 1;
`;

const SliderTicks = styled.svg`
  position: absolute;
  inset: 0;
`;

const Range = styled.input`
  appearance: none;
  position: absolute;
  left: 4px;
  top: 0;
  width: 98px;
  height: 17px;
  background: none;
  &::-webkit-slider-thumb {
    appearance: none;
    width: 7px;
    height: 7px;
    border: 2px solid #000;
    border-radius: 50%;
    background: #fff;
  }
`;

const PushNode = styled.div<{ $x: number; $y: number; $w: number }>`
  ${placed}
  display: flex;
  width: ${(p) => p.$w}px;
  height: 22px;
  border: 1px solid #222;
  border-radius: 3px;
  background: #9796a6;
  overflow: hidden;
  ${NodeName} { border: 0; }
`;

const PushButton = styled.button`
  flex: 1;
  margin: 1px;
  background: linear-gradient(#5a5a5a, #303030);
  border: 2px solid #1a1a1a;
  outline: 1px solid #666;
  outline-offset: -3px;
  color: #fff;
  font-family: "Liberation Serif", serif;
  font-size: 12px;
  line-height: 12px;
`;

/* ---------- Perspective grid ---------- */

type P = [number, number];

/* Least-squares projective map through known grid crossings: (u, v, screen x, screen y). */
const solve = (pts: number[][]): number[] => {
  const rows: number[][] = [];
  pts.forEach(([u, v, x, y]) => {
    rows.push([u, v, 1, 0, 0, 0, -u * x, -v * x, x]);
    rows.push([0, 0, 0, u, v, 1, -u * y, -v * y, y]);
  });
  const m = Array.from({ length: 8 }, (_, i) =>
    Array.from({ length: 9 }, (__, j) => rows.reduce((sum, r) => sum + r[i] * r[j], 0))
  );
  for (let c = 0; c < 8; c++) {
    let p = c;
    for (let r = c + 1; r < 8; r++) if (Math.abs(m[r][c]) > Math.abs(m[p][c])) p = r;
    [m[c], m[p]] = [m[p], m[c]];
    for (let r = 0; r < 8; r++) {
      if (r === c) continue;
      const f = m[r][c] / m[c][c];
      for (let j = c; j < 9; j++) m[r][j] -= f * m[c][j];
    }
  }
  return m.map((row, i) => row[8] / row[i]);
};

const H = solve([
  [0, -1, 635.3, 792],
  [0, 0, 803, 648],
  [-1, 0, 537, 611],
  [-2, 0, 314.3, 580],
  [0, 2, 967, 504.5],
  [-1, 2, 777, 487.4],
  [-2, 2, 606.7, 472.7],
  [-3, 2, 453.3, 459.3],
  [-4, 2, 315, 447.3],
  [-5, 2, 191, 436.3],
  [-4, 1, 163.3, 483],
  [-6, 3, 208.3, 403.7],
  [-5, 3, 317.7, 411.7],
  [-4, 3, 431.7, 420.3],
  [-3, 3, 556.7, 429.3],
  [-6, 4, 317.7, 385.7],
  [-5, 4, 418.3, 391.7],
  [-4, 4, 523.3, 398.7],
  [-7, 5, 317.7, 365.7],
  [-5, 5, 496.7, 375.7],
  [-4, 5, 595.7, 381.7],
  [-8, 6, 317.7, 349.5],
  [-9, 7, 317.7, 337],
]);
const depth = (u: number, v: number) => H[6] * u + H[7] * v + 1;
const project = (u: number, v: number): P => {
  const w = depth(u, v);
  return [(H[0] * u + H[1] * v + H[2]) / w, (H[3] * u + H[4] * v + H[5]) / w];
};
const segment = (a: P, b: P) => {
  const near = 0.2;
  const wa = depth(...a);
  const wb = depth(...b);
  if (wa < near && wb < near) return "";
  const cut = (p: P, q: P, wp: number, wq: number): P => {
    if (wp >= near) return p;
    const t = (near - wp) / (wq - wp);
    return [p[0] + (q[0] - p[0]) * t, p[1] + (q[1] - p[1]) * t];
  };
  const s = project(...cut(a, b, wa, wb));
  const e = project(...cut(b, a, wb, wa));
  return `M${s[0].toFixed(1)} ${s[1].toFixed(1)}L${e[0].toFixed(1)} ${e[1].toFixed(1)}`;
};
const FAR = 46;
const gridPath = (step: number, far: number) => {
  let d = "";
  for (let i = -far; i <= 12; i += step) d += segment([i, -12], [i, far]);
  for (let j = -12; j <= far; j += step) d += segment([-far, j], [12, j]);
  return d;
};
const minorGrid = gridPath(0.1, 22);
const majorGrid = gridPath(1, FAR);

const Model = () => (
  <g transform="translate(130 470) scale(.33333)">
    <path d="M50 261L666 79L1220 135M2320 252L2434 264L2136 548L50 261" stroke="#000" strokeWidth="1.2" fill="none" vectorEffect="non-scaling-stroke" />
    <path d="M268 230L392 258L195 366z" fill="url(#wing)" />
    <path d="M392 258L358 275L596 405z" fill="#000" />
    <path d="M268 230L572 137L870 100L955 153L920 160L1240 125L1330 168L1650 125L1772 166L1970 254L1580 262L1380 355L1532 409L1240 318L1028 418L783 303L596 405L392 258z" fill="url(#fold)" />
    <path d="M1340 350L1580 262L1786 275L1532 409z" fill="#664a18" />
    <path d="M1240 312L1532 409L1345 374z" fill="#000" />
    <path d="M1786 275L1715 320L1670 340L1735 336L2038 461z" fill="#000" />
    <path d="M1580 262L1755 172L1970 254z" fill="#a67826" />
    <path d="M1580 262L1970 254L2012 267L2220 422L2038 461L1786 275z" fill="url(#belly)" />
    <path d="M1755 172L2092 92L2348 204L2012 267L1970 252z" fill="url(#peak)" />
    <path d="M2012 267L2348 204L2220 422z" fill="url(#flank)" />
    <path d="M572 137L870 100L955 153L920 160L750 238z" fill="#8f6a22" opacity=".6" />
    <path d="M480 330L645 258L783 303L596 405z" fill="#6e4f17" opacity=".5" />
    <g fill="none" stroke="#a00a06" strokeWidth="1.1">
      {[
        "M268 230L572 137L870 100L955 153M920 160L1240 125L1330 168L1650 125L1772 166L2092 92L2348 204L2220 422L2038 461L1786 275L1532 409L1240 318L1028 418L783 303L596 405L392 258L195 366z",
        "M268 230L392 258M275 226L628 212L572 137L750 238L920 160L1130 258L1330 168L1560 265L1755 172L1970 252L1580 262L1786 275",
        "M628 212L710 243L670 248L1028 214M670 248L783 303M490 328L670 248M710 243L750 238M900 350L1100 262L1470 228M1100 262L1240 318",
        "M1380 355L1580 262M1970 252L2220 422M2012 267L2348 204M2012 267L2220 422M1755 172L2012 267M1240 318L1345 374L1532 409M1715 320L2038 461",
        "M1960 397L2220 422",
        "M455 196L628 212",
      ].map((d) => <path key={d} d={d} vectorEffect="non-scaling-stroke" />)}
    </g>
    <g stroke="#d40505" strokeWidth="1.1" fill="none">
      {[
        "M537 118L725 138L1045 119M725 138L793 208L585 184M793 208L430 232L230 208M430 236L478 315",
        "M725 272L872 290L1068 276M872 290L958 383M988 169L1138 184L1320 173M1138 184L1222 248M1100 246L1140 258",
        "M1215 335L1320 347M1390 373L1508 461M1635 388L1930 426L2136 548M1530 229L1600 238",
        "M2310 274L2434 264M2150 318L2300 388L2150 372M2300 388L2025 414",
      ].map((d) => <path key={d} d={d} vectorEffect="non-scaling-stroke" />)}
    </g>
    <g stroke="#8024d0" strokeWidth="1.1" fill="none">
      {[
        "M537 118L862 98M537 118L585 184L388 161M585 184L230 208L257 288M725 138L915 160M793 208L915 224",
        "M430 234L645 262L710 348M872 290L1030 311M1138 184L1250 198M1155 360L1226 422M1592 382L1635 388L1808 372M1635 388L1808 502M1370 352L1405 359",
      ].map((d) => <path key={d} d={d} vectorEffect="non-scaling-stroke" />)}
    </g>
    <path d="M50 261L1240 425" stroke="#000" strokeWidth="1.2" fill="none" vectorEffect="non-scaling-stroke" />
  </g>
);

const PerspectiveScene = () => (
  <Scene aria-label="Perspective view">
    <defs>
      <linearGradient id="wing" x1="0" y1="1" x2="1" y2="0"><stop offset="0" stopColor="#dc9f33" /><stop offset="1" stopColor="#6c4c17" /></linearGradient>
      <linearGradient id="fold" x1="0" y1="0" x2="1" y2="0"><stop offset="0" stopColor="#8f6720" /><stop offset=".3" stopColor="#7d5a1a" /><stop offset=".7" stopColor="#84601d" /><stop offset="1" stopColor="#94701f" /></linearGradient>
      <linearGradient id="belly" x1=".3" y1="0" x2=".6" y2="1"><stop offset="0" stopColor="#7c591d" /><stop offset=".7" stopColor="#6e5018" /><stop offset="1" stopColor="#140e02" /></linearGradient>
      <linearGradient id="peak" x1="0" y1="0" x2="1" y2=".2"><stop offset="0" stopColor="#976e22" /><stop offset=".5" stopColor="#b98427" /><stop offset="1" stopColor="#d99c30" /></linearGradient>
      <linearGradient id="flank" x1="1" y1="0" x2=".4" y2="1"><stop offset="0" stopColor="#d0962e" /><stop offset="1" stopColor="#7d5b1c" /></linearGradient>
    </defs>
    <g transform="translate(-136 -104)">
      <path d={minorGrid} stroke="#949aa2" strokeWidth="1" fill="none" />
      <path d={majorGrid} stroke="#84868e" strokeWidth="1" fill="none" />
      <path d="M803 648L1100 390" stroke="#3d963d" strokeWidth="1.6" />
      <path d="M803 648L1100 689" stroke="#9c3a3a" strokeWidth="1.6" />
      <Model />
      <path d="M180.500 813v36l35 3M180.500 849l12-8" stroke="#555" fill="none" />
      <g fill="#5c5c5c" fontSize="16"><text x="183" y="815">z</text><text x="195" y="841">y</text><text x="218" y="854">x</text></g>
    </g>
  </Scene>
);

/* ---------- Grasshopper parts ---------- */

const hexGlyphs: Record<string, React.ReactNode> = {
  point: <path d="M11 10l8 8M19 10l-8 8" stroke="#fff" strokeWidth="3" />,
  vector: <path d="M9 20l7-7-3-3 9-2-2 9-3-2-6 7z" fill="#fff" />,
  circle: <ellipse cx="15" cy="14" rx="8" ry="6" fill="none" stroke="#fff" strokeWidth="2.4" />,
  arc: <path d="M9 8q9 2 9 13M9 8l-2 3M14 21h8" fill="none" stroke="#fff" strokeWidth="2" />,
  curve: (
    <g transform="rotate(-38 15 14)" fill="none" stroke="#ccc">
      <ellipse cx="15" cy="14" rx="10" ry="5.500" strokeWidth="1.600" /><ellipse cx="16" cy="14" rx="6" ry="3" strokeWidth="1.400" /><path d="M13 14h5" />
    </g>
  ),
  line: (<><path d="M10 19L20 9" stroke="#fff" strokeWidth="2" /><path d="M7 17h5v5H7zM18 6h5v5h-5z" fill="none" stroke="#fff" strokeWidth="1.6" /></>),
  plane: <path d="M7 12l13-5 4 8-14 6zM12 10l4 8M9 17l14-6" fill="#999" stroke="#fff" strokeWidth="1.6" />,
  rect: (<><path d="M8 7l14 14M22 7L8 21M4 14h22" stroke="#777" /><path d="M15 8l6 6-6 6-6-6z" fill="#333" stroke="#fff" strokeWidth="2.2" /></>),
  box: (<><path d="M8 9l7-3 8 3v10l-8 4-7-3z" fill="#bbb" stroke="#fff" /><path d="M8 9l7 3 8-3M15 12v10" stroke="#fff" fill="none" /></>),
  brep: <g transform="translate(5 4) scale(.84)"><Cylinder fill="#bbb" hole="#555" edge="#eee" /></g>,
  mesh: <path d="M9 8h12v12H9zM15 6v16M7 14h16M9 8l12 12M21 8L9 20M9 14l6-6 6 6-6 6z" fill="none" stroke="#ccc" />,
  surf: <path d="M12 7l10-1v16l-5 0-9-3q4-5 4-12zM11 13h11M17 7l-1 14" fill="#888" stroke="#ddd" />,
  bool: (<><circle cx="15" cy="14" r="7" fill="#fff" /><path d="M19 9a6 6 0 0 0-8 9z" fill="#222" /></>),
  num: <text x="15" y="20" textAnchor="middle" fontSize="17" fontFamily="Liberation Serif, serif" fontWeight="bold" fill="#ddd">0.1</text>,
  int: <text x="15" y="21" textAnchor="middle" fontSize="20" fontFamily="Liberation Sans, sans-serif" fontWeight="bold" fill="#fff">7</text>,
  txt: <text x="15" y="21" textAnchor="middle" fontSize="21" fontFamily="Liberation Serif, serif" fontWeight="bold" fill="#fff">A</text>,
};

const Hex = ({ n }: { n: string }) => (
  <svg width="31" height="28" viewBox="0 0 30 28" aria-hidden="true">
    <path d="M8 1h14l8 13-8 13H8L0 14z" fill="url(#hexFill)" stroke="#000" />
    <path d="M8.500 2.500h13l6.500 11" fill="none" stroke="#888" strokeWidth=".8" />
    {hexGlyphs[n]}
  </svg>
);

const Plate = () => <rect x="1" y="1" width="28" height="28" rx="3" fill="url(#silver)" stroke="#111" strokeWidth="1.4" />;
const plates: Record<string, React.ReactNode> = {
  import: (<><Plate /><path d="M13 8h4v7h4l-6 6-6-6h4z" fill="#111" /><path d="M4 23h22M5 24v3M9 24v3M13 24v3M17 24v3M21 24v3M25 24v3" stroke="#222" strokeWidth="1.4" /></>),
  graph: (<><rect x="1" y="1" width="28" height="28" rx="2" fill="#ffc62a" stroke="#111" strokeWidth="1.4" /><path d="M5 24l4-5 1 4 4-10 1 8 5-10 0 8 5-11" fill="none" stroke="#9a5a00" strokeWidth="2.4" strokeLinejoin="round" /></>),
  toggle: (<><Plate /><rect x="8" y="4" width="12" height="22" fill="#333" stroke="#111" /><rect x="10" y="6" width="8" height="9" fill="#ddd" /></>),
  knob: (<><circle cx="15" cy="15" r="14" fill="#888" stroke="#222" /><circle cx="15" cy="15" r="12" fill="#aaa" /><path d="M5 15a9 9 0 0 1 17-5l6 5-6 5a9 9 0 0 1-17-5z" fill="#222" /></>),
  digits: (<><Plate /><text x="15" y="12" textAnchor="middle" fontSize="13" fontFamily="Liberation Sans, sans-serif" fontWeight="bold" fill="#555">4</text><text x="15" y="27" textAnchor="middle" fontSize="15" fontFamily="Liberation Sans, sans-serif" fontWeight="bold" fill="#222">5</text></>),
  list: (<><Plate /><path d="M5 5h20v5H5zM5 13h20v5H5zM5 21h20v5H5z" fill="#ccc" stroke="#222" strokeWidth="1.4" /></>),
  gradient: (<><rect x="1" y="1" width="28" height="28" rx="2" fill="url(#pink)" stroke="#111" strokeWidth="1.4" /><path d="M2 2h26v8H2z" fill="#fff" opacity=".4" /><path d="M2 20h27" stroke="#111" strokeWidth="1.4" /><circle cx="3" cy="20" r="2.500" fill="#fff" stroke="#000" /><circle cx="21" cy="20" r="2.500" fill="#fff" stroke="#000" /></>),
  image: (
    <>
      {["#f4ffe0", "#c8f060", "#a8e830", "#d8ff80", "#b0e820", "#58c010", "#40b010", "#80d020", "#30a018", "#90e010", "#208010", "#40d060", "#107808", "#20a020", "#086008", "#40f0a0"].map((c, i) => (
        <rect key={c} x={1 + (i % 4) * 7} y={1 + Math.floor(i / 4) * 7} width="7" height="7" fill={c} />
      ))}
      <rect x="1" y="1" width="28" height="28" rx="2" fill="none" stroke="#111" strokeWidth="1.4" />
    </>
  ),
  cherry: (<><path d="M16 4q-6 6-8 14M16 4q4 8 5 16" fill="none" stroke="#5a3a10" strokeWidth="1.5" /><path d="M16 2Q8 1 5 9q9 2 11-7z" fill="#4aa818" stroke="#275c08" /><circle cx="8" cy="21" r="5.500" fill="#e01818" /><circle cx="21" cy="23" r="5.500" fill="#d01414" /><circle cx="6" cy="19" r="1.500" fill="#fff" /><circle cx="19" cy="21" r="1.500" fill="#fff" /></>),
  tree: (
    <>
      <Plate />
      <path d="M15 28V15M15 20l-6-6M15 18l6-6M15 15l-3-7M15 15l3-8" stroke="#111" strokeWidth="2" />
      <g fill="#1c1c1c" opacity=".9"><circle cx="8" cy="12" r="3" /><circle cx="11" cy="7" r="3.200" /><circle cx="16" cy="6" r="3" /><circle cx="20" cy="8" r="3" /><circle cx="23" cy="12" r="3" /><circle cx="15" cy="11" r="2" /></g>
      <path d="M3 27h24" stroke="#111" strokeWidth="3" />
    </>
  ),
  relay: <path d="M3 10h12V4l12 11-12 11v-6H3z" fill="#3a3a3a" stroke="#888" strokeWidth="1.500" />,
  relayOpen: <path d="M3 10h12V4l12 11-12 11v-6H3z" fill="#eee" stroke="#666" strokeWidth="1.800" />,
  pills: (<><ellipse cx="12" cy="12" rx="8" ry="10" fill="#ccc" stroke="#555" transform="rotate(30 12 12)" /><ellipse cx="10" cy="11" rx="3" ry="4" fill="#555" transform="rotate(30 10 11)" /><ellipse cx="19" cy="18" rx="7" ry="10" fill="#e0307c" stroke="#8a1848" transform="rotate(30 19 18)" /><ellipse cx="18" cy="19" rx="3" ry="4.500" fill="#fbd" transform="rotate(30 18 19)" /></>),
  flask: (<><path d="M12 3h6M13 3v9L6 26q9 3 18 0L17 12V3" fill="#f4d8e4" stroke="#888" strokeWidth="1.200" /><path d="M10 17q5 2 10 0l4 9q-9 3-18 0z" fill="#e02878" /></>),
};
const PlateIcon = ({ n }: { n: string }) => (
  <svg width="31" height="31" viewBox="0 0 30 30" aria-hidden="true">{plates[n] ?? null}</svg>
);

const ribbonGroups = [
  { name: "Geometry", sets: [["point", "vector"], ["circle", "arc", "curve", "line", "plane", "rect"], ["box", "brep", "mesh", "surf"]], hex: true },
  { name: "Primitive", sets: [["bool", "int", "num", "txt"]], hex: true },
  { name: "Input", sets: [["import", "graph"], ["toggle", "knob", "digits", "list"], ["gradient", "image"]], hex: false },
  { name: "Util", sets: [["cherry", "tree"], ["relay", "relayOpen"], ["pills", "flask"]], hex: false },
];

const teeth = (() => {
  let d = "M4 .5H143Q145.500 .5 145.500 3V70Q145.500 72.500 143 72.500H4";
  for (let y = 72.5; y > 4; y -= 6) d += `L1 ${y - 3}L4 ${y - 6}`;
  return `${d}z`;
})();

const Pipeline = ({ x, y, layer }: { x: number; y: number; layer: string }) => (
  <PipelineBox $x={x} $y={y}>
    <PipelineShape width="146" height="73" aria-hidden="true">
      <defs>
        <linearGradient id="nodeFill" x1="0" y1="0" x2="0" y2="1"><stop offset="0" stopColor="#aeadbd" /><stop offset="1" stopColor="#8e8d9e" /></linearGradient>
        <linearGradient id="fade" x1="0" x2="1"><stop offset="0" stopColor="#fff" stopOpacity="0" /><stop offset=".5" stopColor="#fff" /><stop offset="1" stopColor="#fff" stopOpacity="0" /></linearGradient>
      </defs>
      <path d={teeth} fill="url(#nodeFill)" stroke="#444" />
      <rect x="10" y="18" width="126" height="1" fill="url(#fade)" />
    </PipelineShape>
    <PipelineRows>
      <PipelineTitle>Pipeline</PipelineTitle>
      <RowName>Layer:</RowName><span>{layer}</span>
      <RowName>Name:</RowName><span>*</span>
      <RowName>Type:</RowName>
      <TypeIcons>
        <svg width="88" height="18" aria-hidden="true">
          <path d="M5 6l6 6M11 6l-6 6" stroke="#777" strokeWidth="2.400" />
          <g transform="rotate(-42 31 9)" fill="none" stroke="#1d7a2b"><ellipse cx="31" cy="9" rx="8" ry="4.500" strokeWidth="2" /><path d="M26 9q5-4 9 0-4 2-6 0" strokeWidth="1.500" /></g>
          <path d="M46 9l6-6 7 6-7 7z" fill="#bbb" /><circle cx="55" cy="7" r="3" fill="#eee" />
          <circle cx="73" cy="9" r="7" fill="url(#ballSilver)" />
        </svg>
      </TypeIcons>
    </PipelineRows>
  </PipelineBox>
);

const doubleWires = [
  "M1146 289C1270 289 1270 362 1393 362",
  "M1146 373C1216 373 1216 263.500 1286 263.500",
  "M1146 373C1240 373 1300 362 1393 362",
  "M1146 373C1360 373 1560 407 1701 447L1720 452",
  "M1146 456C1270 456 1270 362 1393 362",
  "M1146 456C1370 456 1560 488 1701 528L1720 533",
];
const singleWires = [
  "M1456 378.500C1560 378.500 1570 363 1670 363",
  "M1456 378.500C1560 378.500 1620 366 1701 335",
  "M1456 378.500C1570 378.500 1620 370 1701 341",
  "M1500 834.500C1580 834.500 1640 838 1701 850",
  "M1500 834.500C1580 834.500 1640 843 1701 866",
  "M1466 923C1550 923 1640 917 1701 909",
  "M1466 957C1550 957 1640 951 1701 943",
];
const grips: P[] = [[1145, 289], [1145, 373], [1145, 456], [1287, 263.5], [1434, 263.5], [1394, 362], [1394, 395], [1455, 378.5], [1671, 363], [1498, 834.5], [1463, 923], [1463, 957]];

const Wires = () => (
  <Scene aria-hidden="true">
    <defs>
      <pattern id="canvasGrid" width="135.500" height="45.140" patternUnits="userSpaceOnUse" x="1086" y="231">
        <path d="M.5 0V46M0 .5H136" stroke="#000" strokeOpacity=".14" fill="none" />
      </pattern>
      <radialGradient id="ballSilver" cx="40%" cy="35%" r="65%"><stop offset="0" stopColor="#eee" /><stop offset="1" stopColor="#888" /></radialGradient>
    </defs>
    <g transform={`translate(${-ox} ${-oy})`} fill="none">
      <rect x="900" y="200" width="3000" height="2000" fill="url(#canvasGrid)" />
      {doubleWires.map((d) => (
        <g key={d}>
          <path d={d} stroke="#4c4b48" strokeWidth="4.400" />
          <path d={d} stroke="#b5b1aa" strokeWidth="1.800" />
        </g>
      ))}
      {singleWires.map((d) => <path key={d} d={d} stroke="#2a2a28" strokeOpacity=".78" strokeWidth="2.400" />)}
      <path d="M1146 373h34M1350 362h44M1146 456h24" stroke="#1c1c1c" strokeOpacity=".7" strokeWidth="2.600" />
      {grips.map(([x, y]) => <circle key={`${x}-${y}`} cx={x} cy={y} r="3.600" fill="#fff" stroke="#111" strokeWidth="1.600" />)}
    </g>
  </Scene>
);

const Compass = () => (
  <Scene aria-hidden="true">
    <defs>
      <radialGradient id="dial"><stop offset="0" stopColor="#f2f2f2" /><stop offset="1" stopColor="#a8a8a8" /></radialGradient>
    </defs>
    <g transform={`translate(${-ox} ${-oy})`}>
      <path d="M1639 908l8 2-1 6q6-5 12-5 2-3 6-3t7 4q7-1 8 1 12 8 14 26 0 10-5 10H1640q-6-8-3-18 0-10 5-12 1-6 3-7l-5 2z" fill="#000" />
      <circle cx="1664.500" cy="938" r="24" fill="url(#dial)" stroke="#fff" strokeWidth="1.500" />
      <path d="M1647 921l8-3-2 9zM1677 917l8 9-8 1zM1644 955l2-7 8 3zM1675 952l8-1 1 7z" fill="#fff" />
      <path d="M967 940h11v20h-11z" fill="#bbb" stroke="#111" strokeWidth="1.500" />
    </g>
  </Scene>
);

/* ---------- Data ---------- */

const toolTabs = ["Standard", "CPlanes", "Set View", "Display", "Select", "Viewport Layout", "Visibility", "Transform", "Curve Tools", "Surface Tools", "Solid Tools"];
const mainTools = "new open save* print props cut copy paste undo* pan orbit zoom zoomWin zoomExt zoomSel zoomPrev* views* car* cplane* setcp* shapes* bulb* lock* layer* wheel* wire shade* render* spot* gear* dims* gh* help*".split(" ");
const sideTools = "arrow point* polyline* curve* circle* ellipse* arc* rect* polygon* fillet* surface* revolve* box* spheres* loft* mesh* puzzle explode trim split group* ungroup editPts ctrlPts* text move* copies rotate cage* extrude* array* align* flow* check* solids* pyramid*".split(" ");
const snaps: [string, boolean][] = [["End", true], ["Near", true], ["Point", true], ["Mid", true], ["Cen", true], ["Int", true], ["Perp", true], ["Tan", true], ["Quad", false], ["Knot", false], ["Vertex", false]];
const categories = ["Prm", "Math", "Set", "Vec", "Crv", "Srf", "Msh", "Int", "Trns", "Dis", "Crane", "Wb", "Kangaroo2", "LunchBox", "C"];

const tool = (id: string) => {
  const more = id.endsWith("*");
  const n = more ? id.slice(0, -1) : id;
  return <ToolButton key={n} $more={more} aria-label={n}><Pic n={n} /></ToolButton>;
};

const Caret = () => <svg width="6" height="4" aria-hidden="true"><path d="M0 0h6L3 4z" fill="#111" /></svg>;

const Grasshopper = () => (
  <Window>
    <TitleGap />
    <MenuBar>
      {["File", "Edit", "View", "Display", "Solution", "Help"].map((m) => <MenuItem key={m}>{m}</MenuItem>)}
      <DocName>Origami*</DocName>
    </MenuBar>
    <Categories>
      {categories.map((c, i) => <Category key={c} $active={i === 0}>{c}</Category>)}
    </Categories>
    <Ribbon>
      {ribbonGroups.map((g) => (
        <Group key={g.name}>
          <GroupBody>
            {g.sets.map((set) => (
              <GroupCells key={set[0]}>
                {set.map((n) => <Cell key={n} aria-label={n}>{g.hex ? <Hex n={n} /> : <PlateIcon n={n} />}</Cell>)}
              </GroupCells>
            ))}
          </GroupBody>
          <GroupLabel>
            {g.name}
            <svg width="9" height="9" aria-hidden="true"><path d="M3 0h3v4h3L4.500 9 0 4h3z" fill="#888" /></svg>
          </GroupLabel>
        </Group>
      ))}
    </Ribbon>
    <CanvasBar>
      <BarButton $w={28} aria-label="Open"><Pic n="ghOpen" s={25} /></BarButton>
      <BarButton $w={43} aria-label="Save"><Pic n="ghSave" s={28} /></BarButton>
      <BarRule $gap={3} />
      <ZoomBox>
        <ZoomSelect aria-label="Zoom" defaultValue="90%"><option>90%</option></ZoomSelect>
        <svg width="10" height="8" aria-hidden="true"><path d="M1 1l4 5 4-5" fill="none" stroke="#444" /></svg>
      </ZoomBox>
      <BarButton $w={40} aria-label="Zoom extents"><Pic n="focus" s={28} /></BarButton>
      <BarButton $w={10} aria-label="Zoom options"><Caret /></BarButton>
      <BarButton $w={40} aria-label="Preview"><Pic n="eye" s={27} /></BarButton>
      <BarButton $w={12} aria-label="Preview options"><Caret /></BarButton>
      <BarButton $w={36} aria-label="Sketch"><Pic n="pencil" s={27} /></BarButton>
      <Flex />
      <BarButton $w={36} aria-label="No preview"><Pic n="noPrev" s={28} /></BarButton>
      <BarButton $w={35} aria-label="Wireframe"><Pic n="wirePrev" s={28} /></BarButton>
      <BarButton $on aria-label="Shaded"><Pic n="shadePrev" s={28} /></BarButton>
      <BarRule $gap={8} />
      <BarButton aria-label="Selected only"><Pic n="teal" s={28} /></BarButton>
      <BarButton aria-label="Half"><Pic n="halfGreen" s={28} /></BarButton>
      <BarButton aria-label="Materials"><Pic n="halfOrange" s={27} /></BarButton>
      <BarRule $gap={3} />
      <BarButton $w={30} aria-label="Quality"><Pic n="hepta" s={25} /></BarButton>
      <BarButton $w={10} aria-label="Quality options"><Caret /></BarButton>
    </CanvasBar>
    <Canvas>
      <GroupArea $x={1317} $y={798} />
      <Wires />
      <Pipeline x={998} y={252} layer="Borde" />
      <Pipeline x={998} y={336} layer="Valle" />
      <Pipeline x={998} y={419} layer="Cresta" />
      <DataPanel $x={1288} $y={218}>
        {[24, 25, 26, 27].map((i) => (
          <DataRow key={i}>
            <DataIndex>{i}</DataIndex>
            <span>Referenced Line-<br />like Curve</span>
          </DataRow>
        ))}
        <DataThumb />
      </DataPanel>
      <Component $x={1395} $y={344} $w={60} $h={70}>
        <Ports><span>L</span><span>V</span></Ports>
        <CoreName>wbWeave</CoreName>
        <Ports><span>O</span></Ports>
      </Component>
      <Component $x={1672} $y={343} $w={60} $h={40}>
        <Ports><span>M</span></Ports>
        <CoreName>Tri</CoreName>
        <Ports />
      </Component>
      <NumberSlider $x={1344} $y={825}>
        <NodeName $w={45}>Folding</NodeName>
        <SliderTrack>
          <SliderTicks width="108" height="17" aria-hidden="true">
            <path d="M8 8.500h22M62 8.500h37M8.500 5v4M17.500 5v4M26.500 5v4M71.500 5v4M80.500 5v4M89.500 5v4M98.500 5v4" stroke="#aaa" />
            <text x="30" y="12" fontSize="9" fill="#111">1.439</text>
          </SliderTicks>
          <Range type="range" min="0" max="1000" defaultValue="579" aria-label="Folding" />
        </SliderTrack>
      </NumberSlider>
      <PushNode $x={1369} $y={912} $w={94}>
        <NodeName $w={48}>Button</NodeName>
        <PushButton aria-label="Button" />
      </PushNode>
      <PushNode $x={1367} $y={947} $w={96}>
        <NodeName $w={50}>Toggle</NodeName>
        <PushButton>True</PushButton>
      </PushNode>
      <Compass />
    </Canvas>
  </Window>
);

const layers = [
  { color: "#000", current: false },
  { color: "#c80000", current: false },
  { color: "#7a24c8", current: true },
];

export default function App() {
  return (
    <Shell>
      <GlobalStyle />
      <Defs />
      <CommandBar>
        <label htmlFor="command">Command:</label>
        <CommandInput id="command" />
        <Spinner>
          <SpinButton aria-label="Previous"><svg width="8" height="4"><path d="M4 0l4 4H0z" /></svg></SpinButton>
          <SpinButton aria-label="Next"><svg width="8" height="4"><path d="M0 0h8L4 4z" /></svg></SpinButton>
        </Spinner>
      </CommandBar>
      <TabStrip>
        {toolTabs.map((t, i) => <ToolTab key={t} $active={i === 0}>{t}</ToolTab>)}
        <TabGear aria-label="Toolbar options"><Pic n="cog" s={17} /></TabGear>
      </TabStrip>
      <Toolbar>{mainTools.map(tool)}</Toolbar>
      <Body>
        <Toolbox>
          <Grip />
          <ToolGrid>{sideTools.map(tool)}</ToolGrid>
        </Toolbox>
        <Center>
          <Viewport>
            <PerspectiveScene />
            <ViewTitle>
              Perspective
              <svg width="14" height="21" aria-hidden="true"><path d="M.5 1v19" stroke="#222" /><path d="M3 8h9l-4.500 5z" fill="#222" /></svg>
            </ViewTitle>
          </Viewport>
          <ViewTabs>
            <ViewTab $active>Perspective</ViewTab>
            <ViewTab>Top</ViewTab>
            <ViewTab>Front</ViewTab>
            <ViewTab>Right</ViewTab>
            <ViewTab aria-label="Add view">
              <svg width="12" height="12" aria-hidden="true"><path d="M4.500 .5h3v4h4v3h-4v4h-3v-4h-4v-3h4z" fill="#fff" stroke="#888" /></svg>
            </ViewTab>
          </ViewTabs>
        </Center>
        <SidePanel>
          <PanelGrip />
          <PanelTabs>
            <PanelTool aria-label="Display"><Pic n="paint" s={20} /></PanelTool>
            <PanelTool aria-label="Materials"><Pic n="tube" s={20} /></PanelTool>
            <PanelTool aria-label="Libraries"><Pic n="open" s={20} /></PanelTool>
            <PanelTool aria-label="Help"><Pic n="panelHelp" s={20} /></PanelTool>
            <PanelGear aria-label="Panel options"><Pic n="cog" s={20} /></PanelGear>
          </PanelTabs>
          <PanelTools>
            <PanelTool aria-label="Move down"><Pic n="down" s={19} /></PanelTool>
            <PanelTool aria-label="Collapse"><Pic n="left" s={20} /></PanelTool>
            <PanelTool $more aria-label="Filter"><Pic n="funnel" s={19} /></PanelTool>
            <PanelTool $more aria-label="Match"><Pic n="doc" s={20} /></PanelTool>
            <PanelTool $more aria-label="Tools"><Pic n="hammer" s={20} /></PanelTool>
            <PanelTool aria-label="Layer help"><Pic n="help" s={22} /></PanelTool>
          </PanelTools>
          <LayerList>
            <LayerTable>
              <colgroup><col width="41" /><col width="21" /><col width="21" /><col width="80" /><col /></colgroup>
              <thead><tr><th /><th /><th /><th scope="col">Material</th><th scope="col">Linetype</th></tr></thead>
              <tbody>
                {layers.map((l) => (
                  <LayerRow key={l.color} $current={l.current}>
                    <BulbCell>{!l.current && <Pic n="yellowBulb" s={18} />}</BulbCell>
                    <LockCell>{!l.current && <Pic n="unlock" s={18} />}</LockCell>
                    <td><Swatch $c={l.color} $current={l.current} aria-label="Layer colour" /></td>
                    <td><MaterialDot $current={l.current} /></td>
                    <td>{l.current ? "Continu." : "Continuous"}</td>
                  </LayerRow>
                ))}
              </tbody>
            </LayerTable>
          </LayerList>
          <PanelScroll>
            <ScrollThumb />
            <ScrollArrow aria-label="Scroll right"><svg width="8" height="12"><path d="M1 1l5 5-5 5" fill="none" stroke="#444" strokeWidth="2" /></svg></ScrollArrow>
          </PanelScroll>
        </SidePanel>
      </Body>
      <OsnapBar>
        {snaps.map(([s, on]) => (
          <Snap key={s}><SnapBox type="checkbox" defaultChecked={on} />{s}</Snap>
        ))}
        <Snap $off><SnapBox type="checkbox" disabled />Project</Snap>
        <Snap $off><SnapBox type="checkbox" disabled />Disable</Snap>
      </OsnapBar>
      <Grasshopper />
    </Shell>
  );
}
